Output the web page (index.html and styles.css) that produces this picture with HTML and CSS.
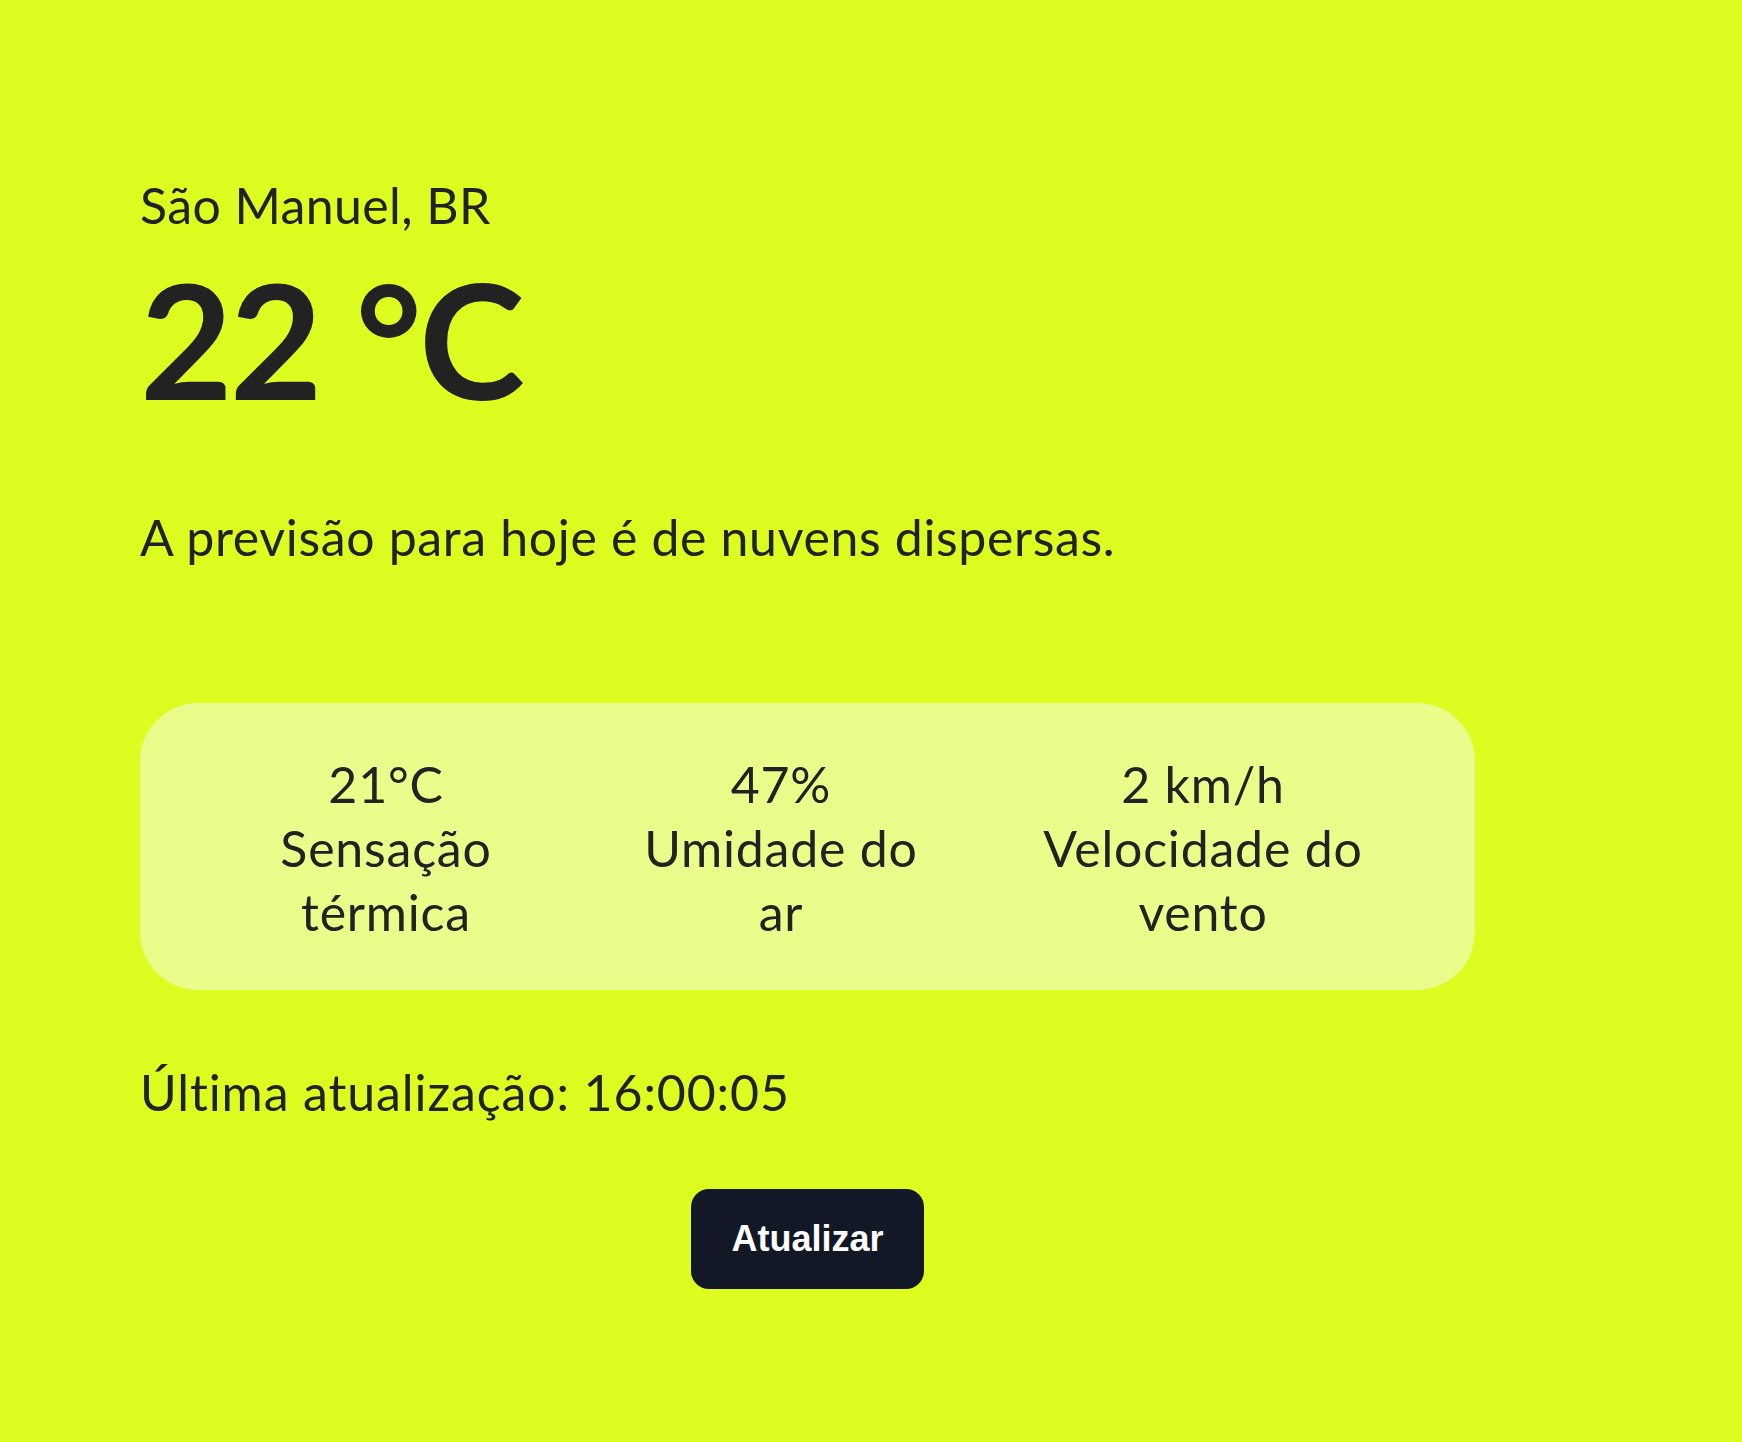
FILE: index.html
```html
<!DOCTYPE html>
<html lang="pt-BR">
<head>
<meta charset="utf-8">
<title>Clima</title>
<link rel="stylesheet" href="styles.css">
</head>
<body>
<main class="weather">
  <p class="location">São Manuel, BR</p>
  <h1 class="temp">22 °C</h1>
  <p class="forecast">A previsão para hoje é de nuvens dispersas.</p>
  <section class="stats">
    <div class="stat stat-feel">
      <p>21°C</p>
      <p>Sensação térmica</p>
    </div>
    <div class="stat stat-hum">
      <p>47%</p>
      <p>Umidade do ar</p>
    </div>
    <div class="stat stat-wind">
      <p>2 km/h</p>
      <p>Velocidade do vento</p>
    </div>
  </section>
  <p class="updated">Última atualização: 16:00:05</p>
  <div class="actions">
    <button class="refresh" type="button">Atualizar</button>
  </div>
</main>
</body>
</html>
```
FILE: styles.css
```css
html, body {
  margin: 0;
  padding: 0;
}

body {
  background: #dcfd1f;
  color: #222222;
  font-family: "Lato", "Noto Sans", sans-serif;
  min-height: 1442px;
}

.weather {
  width: 1335px;
  padding: 175px 0 0 140px;
}

p {
  margin: 0;
}

.location {
  font-size: 50px;
  line-height: 60px;
  letter-spacing: 0.4px;
}

.temp {
  margin: 23px 0 0;
  font-size: 160px;
  line-height: 160px;
  font-weight: 700;
  letter-spacing: -3px;
}

.forecast {
  margin-top: 89px;
  font-size: 50px;
  line-height: 60px;
  letter-spacing: 0.65px;
}

.stats {
  margin-top: 136px;
  background: #eafd8a;
  border-radius: 58px;
  height: 287px;
  box-sizing: border-box;
  padding: 49px 0 0 96px;
  display: grid;
  grid-template-columns: 300px 320px 354px;
  column-gap: 85px;
  align-items: start;
}

.stat {
  text-align: center;
  font-size: 50px;
  line-height: 64px;
  letter-spacing: 0.8px;
}

.updated {
  margin-top: 72px;
  font-size: 50px;
  line-height: 60px;
  letter-spacing: 0.9px;
}

.actions {
  display: flex;
  justify-content: center;
  margin-top: 67px;
}

.refresh {
  height: 100px;
  padding: 0 40px;
  border: none;
  border-radius: 18px;
  background: #121826;
  color: #ffffff;
  font-family: "Liberation Sans", Arial, sans-serif;
  font-weight: 700;
  font-size: 36px;
  cursor: pointer;
}
```
